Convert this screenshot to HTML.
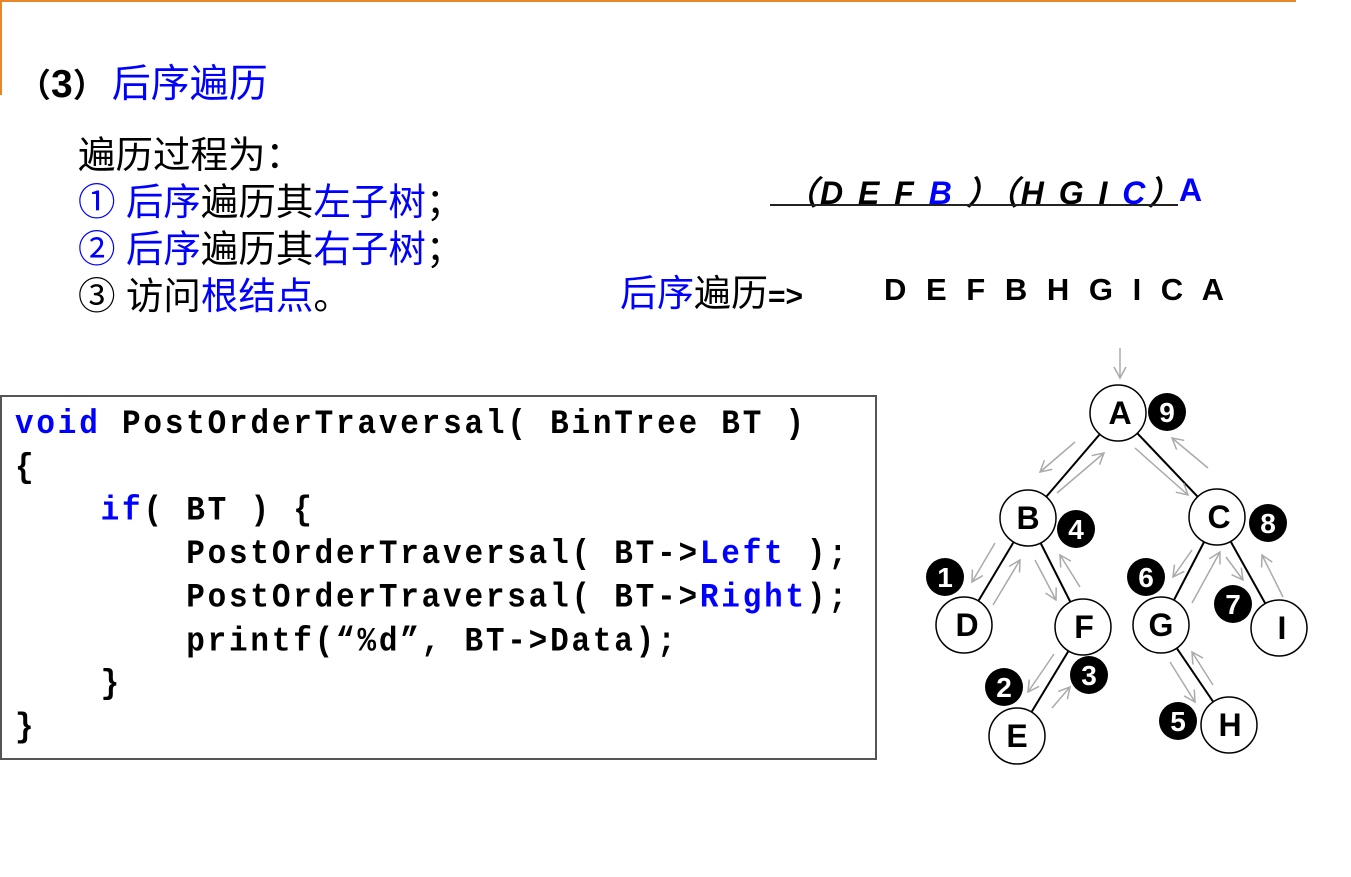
<!DOCTYPE html>
<html><head><meta charset="utf-8"><style>
html,body{margin:0;padding:0;background:#fff;}
body{width:1351px;height:877px;position:relative;overflow:hidden;font-family:"Liberation Sans","WenQuanYi Zen Hei",sans-serif;}
.a{position:absolute;white-space:nowrap;}
.b{color:#0000ff;}
.z{font-family:"WenQuanYi Zen Hei","Noto Sans CJK SC",sans-serif;}
.n{font-family:"Noto Sans CJK SC",sans-serif;}
.cjk{font-family:"Liberation Sans","WenQuanYi Zen Hei",sans-serif;font-size:37.5px;line-height:47px;}
pre{margin:0;font-family:"Liberation Mono",monospace;font-weight:bold;font-size:31px;letter-spacing:2.8px;line-height:38.7px;color:#000;white-space:pre !important;transform:scaleY(1.12);transform-origin:0 0;}
</style></head><body>
<div class="a" style="left:0;top:0;width:1296px;height:2px;background:#e8872a"></div>
<div class="a" style="left:0;top:0;width:2px;height:95px;background:#e8872a"></div>

<div class="a" style="left:18px;top:58px;font-size:39px;line-height:46px;"><b><span class="n" style="font-size:33px">（</span>3<span class="n" style="font-size:33px">）</span></b><span class="b z" style="margin-left:6px">后序遍历</span></div>

<div class="a cjk" style="left:78px;top:132px;">遍历过程为：<br><span class="b">① 后序</span>遍历其<span class="b">左子树</span>；<br><span class="b">② 后序</span>遍历其<span class="b">右子树</span>；<br>③ 访问<span class="b">根结点</span>。</div>

<div class="a" style="left:785px;top:168px;font-size:32px;font-style:italic;font-weight:bold;letter-spacing:3px;">（D E F <span class="b">B</span> ）（H G I <span class="b">C</span>）</div>
<div class="a" style="left:770px;top:204px;width:408px;height:2px;background:#222"></div>
<div class="a b" style="left:1179px;top:172px;font-size:32px;font-weight:bold;">A</div>

<div class="a" style="left:620px;top:267px;font-size:37px;line-height:46px;"><span class="b z">后序</span><span class="z">遍历</span><b style="font-size:30px">=&gt;</b></div>
<div class="a" style="left:884px;top:272px;font-size:31px;font-weight:bold;word-spacing:11px;">D E F B H G I C A</div>

<div class="a" style="left:0;top:395px;width:873px;height:361px;border:2px solid #555;"></div>
<pre class="a" style="left:15px;top:404px;"><span class="b">void</span> PostOrderTraversal( BinTree BT )
{
    <span class="b">if</span>( BT ) {
        PostOrderTraversal( BT-&gt;<span class="b">Left</span> );
        PostOrderTraversal( BT-&gt;<span class="b">Right</span>);
        printf(“%d”, BT-&gt;Data);
    }
}</pre>

<svg class="a" style="left:0;top:0" width="1351" height="877" xmlns="http://www.w3.org/2000/svg">
<defs><marker id="m" markerWidth="14" markerHeight="14" refX="12" refY="7" orient="auto" markerUnits="userSpaceOnUse"><path d="M1,1 L12,7 L1,13" fill="none" stroke="#aaa" stroke-width="1.5"/></marker></defs>
<g stroke="#000" stroke-width="2">
<line x1="1118" y1="413" x2="1028" y2="518"/><line x1="1118" y1="413" x2="1217" y2="517"/>
<line x1="1028" y1="518" x2="964" y2="625"/><line x1="1028" y1="518" x2="1083" y2="627"/>
<line x1="1083" y1="627" x2="1017" y2="736"/>
<line x1="1217" y1="517" x2="1161" y2="625"/><line x1="1217" y1="517" x2="1279" y2="628"/>
<line x1="1161" y1="625" x2="1229" y2="725"/>
</g>
<g stroke="#aaa" stroke-width="1.5" marker-end="url(#m)">
<line x1="1120" y1="348" x2="1120" y2="378"/>
<line x1="1075" y1="442" x2="1040" y2="472"/><line x1="1057" y1="493" x2="1104" y2="453"/>
<line x1="1135" y1="448" x2="1188" y2="495"/><line x1="1208" y1="468" x2="1172" y2="438"/>
<line x1="995" y1="543" x2="972" y2="582"/><line x1="993" y1="605" x2="1020" y2="560"/>
<line x1="1035" y1="560" x2="1056" y2="600"/><line x1="1080" y1="587" x2="1060" y2="555"/>
<line x1="1054" y1="654" x2="1028" y2="692"/><line x1="1052" y1="708" x2="1070" y2="687"/>
<line x1="1192" y1="550" x2="1173" y2="577"/><line x1="1192" y1="603" x2="1220" y2="552"/>
<line x1="1226" y1="557" x2="1243" y2="580"/><line x1="1283" y1="597" x2="1262" y2="555"/>
<line x1="1170" y1="662" x2="1195" y2="702"/><line x1="1213" y1="685" x2="1192" y2="652"/>
</g>
<g fill="#fff" stroke="#000" stroke-width="1.5">
<circle cx="1118" cy="413" r="28"/><circle cx="1028" cy="518" r="28"/><circle cx="1217" cy="517" r="28"/>
<circle cx="964" cy="625" r="28"/><circle cx="1083" cy="627" r="28"/><circle cx="1161" cy="625" r="28"/>
<circle cx="1279" cy="628" r="28"/><circle cx="1017" cy="736" r="28"/><circle cx="1229" cy="725" r="28"/>
</g>
<g font-family="Liberation Sans" font-weight="bold" font-size="32" text-anchor="middle">
<text x="1120" y="424">A</text><text x="1028" y="529">B</text><text x="1219" y="528">C</text>
<text x="967" y="636">D</text><text x="1084" y="638">F</text><text x="1161" y="636">G</text>
<text x="1282" y="639">I</text><text x="1017" y="747">E</text><text x="1230" y="736">H</text>
</g>
<g fill="#000">
<circle cx="1167" cy="412" r="19"/><circle cx="1076" cy="529" r="19"/><circle cx="1268" cy="523" r="19"/>
<circle cx="945" cy="577" r="19"/><circle cx="1146" cy="577" r="19"/><circle cx="1233" cy="604" r="19"/>
<circle cx="1004" cy="687" r="19"/><circle cx="1089" cy="675" r="19"/><circle cx="1178" cy="721" r="19"/>
</g>
<g fill="#fff" font-family="Liberation Sans" font-weight="bold" font-size="28" text-anchor="middle">
<text x="1167" y="422">9</text><text x="1076" y="539">4</text><text x="1268" y="533">8</text>
<text x="945" y="587">1</text><text x="1146" y="587">6</text><text x="1233" y="614">7</text>
<text x="1004" y="697">2</text><text x="1089" y="685">3</text><text x="1178" y="731">5</text>
</g>
</svg>
</body></html>
